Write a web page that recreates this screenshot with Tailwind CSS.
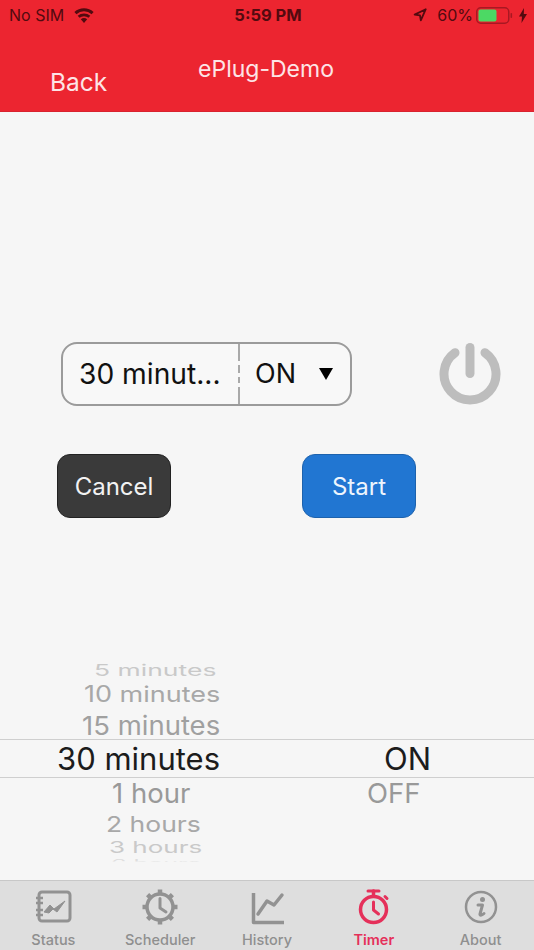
<!DOCTYPE html>
<html lang="en">
<head>
  <meta charset="UTF-8" />
  <meta name="viewport" content="width=device-width, initial-scale=1.0" />
  <title>ePlug-Demo</title>
  <script src="https://cdn.jsdelivr.net/npm/@tailwindcss/browser@4"></script>
</head>
<body class="bg-[#f6f6f6] font-['Inter','Liberation_Sans',sans-serif]">
  <div class="w-[534px] h-[950px] flex flex-col overflow-hidden">

    <!-- header -->
    <header class="h-[112px] shrink-0 bg-[#ec2530] border-b border-[#d9232f] flex flex-col">
      <div class="h-[30px] flex items-center justify-between pl-[9px] pr-[7px] text-[#520a0f] text-[16px]">
        <div class="flex items-center gap-[10px] w-[170px]">
          <span>No SIM</span>
          <svg width="20" height="15" viewBox="0 0 20 15" fill="#520a0f"><path d="M10 15 6.8 11.3a5 5 0 0 1 6.4 0Z"/><path d="M5.5 9.8 3.7 7.7a9.700 9.700 0 0 1 12.600 0l-1.800 2.100a7 7 0 0 0-9 0Z"/><path d="M2.400 6.200.4 3.900a14.600 14.600 0 0 1 19.200 0l-2 2.300a11.600 11.600 0 0 0-15.200 0Z"/></svg>
        </div>
        <span class="font-bold text-[16.5px]">5:59 PM</span>
        <div class="flex items-center justify-end w-[170px]">
          <svg class="mr-[10px]" width="14" height="14" viewBox="0 0 17 17" fill="none" stroke="#520a0f" stroke-width="2.200" stroke-linejoin="round"><path d="M15.500 1.500 2 8l6.500 1 1 6Z"/></svg>
          <span>60%</span>
          <svg class="ml-[3px]" width="38" height="17" viewBox="0 0 38 17"><rect x="0.750" y="0.750" width="32" height="15.500" rx="4" fill="none" stroke="#a81822" stroke-width="1.500"/><rect x="2.500" y="2.500" width="18" height="12" rx="2" fill="#4cd964"/><rect x="34.500" y="6" width="1.600" height="5" rx="0.800" fill="#a81822"/></svg>
          <svg class="ml-[5px]" width="8" height="15" viewBox="0 0 8 15" fill="#520a0f"><path d="M5 0 0 8.500h3L2.500 15 8 6H4.800Z"/></svg>
        </div>
      </div>
      <div class="relative flex-1">
        <span class="absolute left-[50px] top-[36px] text-[24.5px] leading-[32px] text-[#fde4e6]">Back</span>
        <div class="text-center text-[23px] leading-[30px] pt-[24px] pr-[2px] text-[#fde4e6]">ePlug-Demo</div>
      </div>
    </header>

    <!-- main -->
    <main class="flex-1 flex flex-col">
      <div class="mt-[230px] pl-[61px] flex items-center">
        <div class="w-[291px] h-[64px] border-2 border-[#9b9b9b] rounded-[16px] flex items-center bg-[#f8f8f8] text-[#111]">
          <div class="w-[175px] flex items-center pl-[16px] text-[28.2px]">30 minut...</div>
          <svg width="2" height="60" viewBox="0 0 2 60" stroke="#8f8f8f" stroke-width="1.500"><path d="M1 0v17M1 21v8M1 33v6M1 43v17"/></svg>
          <div class="flex-1 flex items-center pl-[15px] text-[27px]">ON</div>
          <svg class="mr-[17px]" width="14" height="12" viewBox="0 0 14 12" fill="#000"><path d="M0 0h14L7 12Z"/></svg>
        </div>
        <svg class="ml-[87px]" width="62" height="62" viewBox="0 0 62 62" fill="none" stroke="#bdbdbd" stroke-width="9" stroke-linecap="round"><path d="M16 9.700a26 26 0 1 0 30 0"/><path d="M31 4.500v26"/></svg>
      </div>

      <div class="mt-[48px] pl-[57px] flex gap-[131px]">
        <button class="w-[114px] h-[64px] pt-[1px] rounded-[13px] bg-[#3a3a3a] border border-[#222] text-[#f2f2f2] text-[24px]">Cancel</button>
        <button class="w-[114px] h-[64px] pt-[1px] rounded-[13px] bg-[#2176d2] border border-[#1d62ad] text-[#eef5fd] text-[24px]">Start</button>
      </div>

      <!-- picker -->
      <div class="mt-[142px] flex flex-col leading-none">
        <div class="h-[22px] pb-[2px] flex items-center pl-[94px] text-[#c9c9c9] text-[26.5px] scale-y-[0.6]">5 minutes</div>
        <div class="h-[26px] pb-[2px] flex items-center pl-[84px] text-[#a8a8a8] text-[27px] scale-y-[0.82]">10 minutes</div>
        <div class="h-[31px] pt-[6px] flex items-center pl-[82px] text-[#a0a0a0] text-[27.5px] scale-y-[0.95]">15 minutes</div>
        <div class="h-[39px] border-y border-[#cfcfcf] flex items-center text-[#1c1c1c] text-[31px]">
          <span class="w-[384px] pl-[57px]">30 minutes</span>
          <span>ON</span>
        </div>
        <div class="h-[30px] pt-[1px] flex items-center text-[#999] text-[27.5px]">
          <span class="w-[367px] pl-[112px]">1 hour</span>
          <span>OFF</span>
        </div>
        <div class="h-[30px] pt-[3px] flex items-center pl-[106px] text-[#a8a8a8] text-[26.5px] scale-y-[0.82]">2 hours</div>
        <div class="h-[18px] flex items-center pl-[109px] text-[#c9c9c9] text-[26px] scale-y-[0.62]">3 hours</div>
        <div class="h-[8px] overflow-hidden flex items-start pl-[111px] text-[#dedede] text-[25px] scale-y-[0.4]">6 hours</div>
      </div>
    </main>

    <!-- tab bar -->
    <nav class="h-[70px] shrink-0 bg-[#dedede] border-t border-[#c8c8c8] grid grid-cols-5 text-[14.5px] font-medium text-[#8f8f8f]">
      <div class="flex flex-col items-center pt-[8px]">
        <svg width="38" height="36" viewBox="0 0 38 36" fill="none" stroke="#929292" stroke-width="3" stroke-linejoin="round"><rect x="5" y="3" width="31" height="29" rx="3"/><path d="M2 9h7M2 14h7M2 21h7M2 26h7" stroke-width="2.500"/><path d="M10 23l6-7 4 4 11-8-8 11-4-3-4 4Z" fill="#929292" stroke-width="1"/></svg>
        <span class="leading-[18px] mt-[6px]">Status</span>
      </div>
      <div class="flex flex-col items-center pt-[8px]">
        <svg width="36" height="36" viewBox="0 0 36 36" fill="none" stroke="#929292"><circle cx="18" cy="18" r="13" stroke-width="3.500"/><path d="M18 9.500V19l6 4" stroke-width="3" stroke-linecap="round" stroke-linejoin="round"/><path d="M18 0.500v5M18 30.500v5M0.500 18h5M30.500 18h5M5.600 5.600l3.500 3.500M26.900 26.900l3.500 3.500M5.600 30.400l3.500-3.500M26.900 9.100l3.500-3.500" stroke-width="4.500"/></svg>
        <span class="leading-[18px] mt-[6px]">Scheduler</span>
      </div>
      <div class="flex flex-col items-center pt-[8px]">
        <svg width="36" height="36" viewBox="0 0 36 36" fill="none" stroke="#929292" stroke-width="3.500" stroke-linejoin="round"><path d="M4.500 4v29.500H35"/><path d="M9 25l9-13 7 4 8-10" stroke-linecap="round"/></svg>
        <span class="leading-[18px] mt-[6px]">History</span>
      </div>
      <div class="flex flex-col items-center pt-[8px] text-[#e5305a]">
        <svg width="36" height="36" viewBox="0 0 36 36" fill="none" stroke="#e5305a" stroke-width="3.500" stroke-linecap="round" stroke-linejoin="round"><circle cx="17.500" cy="20.500" r="13"/><path d="M12 2h11" stroke-width="3"/><path d="M17.500 2v5"/><path d="M29 7.500l2 2" stroke-width="3"/><path d="M17.500 13v8l5 4" stroke-width="3"/></svg>
        <span class="leading-[18px] mt-[6px] font-semibold">Timer</span>
      </div>
      <div class="flex flex-col items-center pt-[8px]">
        <svg width="36" height="36" viewBox="0 0 36 36" fill="none" stroke="#929292"><circle cx="18" cy="18" r="15" stroke-width="2.500"/><circle cx="19.500" cy="10.500" r="2.500" fill="#929292" stroke="none"/><path d="M15 16h4.500l-2.500 9c-.4 1.500 1.500 1.800 4 -.5" stroke-width="3" stroke-linecap="round" stroke-linejoin="round"/></svg>
        <span class="leading-[18px] mt-[6px]">About</span>
      </div>
    </nav>
  </div>
</body>
</html>
